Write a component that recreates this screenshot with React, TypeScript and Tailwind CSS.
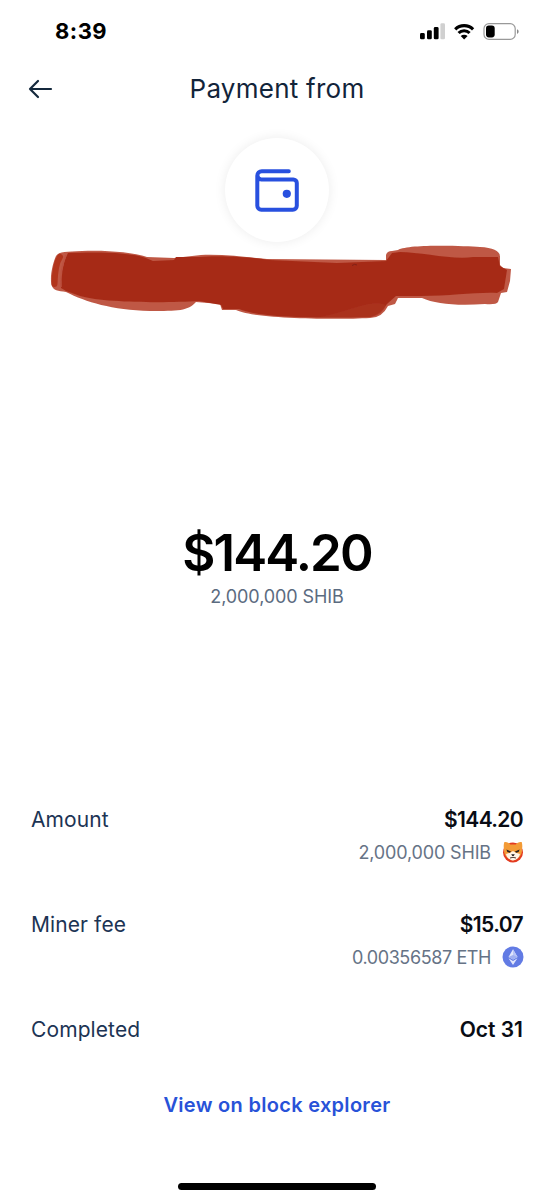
import type { ReactNode } from 'react';

function StatusIcons() {
  return (
    <svg width="100" height="20" viewBox="419 21 100 20" aria-hidden="true">
      <rect x="420" y="33" width="4.8" height="6.3" rx="1.4" />
      <rect x="427" y="30.2" width="4.8" height="9.1" rx="1.4" />
      <rect x="433.8" y="27" width="4.8" height="12.3" rx="1.4" />
      <rect x="440.4" y="23.3" width="4.6" height="16" rx="1.3" fill="#d0d0d0" />
      <path d="M455.2 29.4a12.6 12.6 0 0 1 17.9 0M458.6 33a7.7 7.7 0 0 1 11 0" fill="none" stroke="#000" strokeWidth="3.1" />
      <path d="M460.7 36.1a5 5 0 0 1 6.9 0l-3.45 3.5z" />
      <rect x="484" y="23.6" width="31.2" height="15.8" rx="5" fill="none" stroke="#999" strokeWidth="1.2" />
      <rect x="486" y="25.6" width="8.7" height="11.8" rx="2.8" />
      <path d="M517 29.2c2.2.8 2.2 3.8 0 4.6z" fill="#888" />
    </svg>
  );
}

function WalletIcon() {
  return (
    <svg width="46" height="46" viewBox="254 167 46 46" fill="none" stroke="#2850df" strokeWidth="4" aria-hidden="true">
      <path d="M288.8 171.2h-27a4.5 4.5 0 0 0-4.5 4.5v30a4 4 0 0 0 4 4h31.5a4 4 0 0 0 4-4v-22.8a3.5 3.5 0 0 0-3.5-3.5h-32a3.8 3.8 0 0 1-3.8-3.8" strokeLinecap="round" />
      <circle cx="286.8" cy="193.8" r="4.1" fill="#2850df" stroke="none" />
    </svg>
  );
}

function Scribble() {
  return (
    <svg className="relative -mt-0.5 ml-10 shrink-0 self-start" width="480" height="84" viewBox="40 240 480 84" aria-hidden="true">
      <defs>
        <filter id="brush" x="-5%" y="-10%" width="110%" height="120%">
          <feGaussianBlur stdDeviation="0.7" />
        </filter>
      </defs>
      <g filter="url(#brush)">
        <path fill="#bf5845" d="M52 286C49 279 53 262 56 256C59 251 67 252 82 251C105 250 132 252 147 257L174 258L201 255C222 254 245 257 267 259L386 260V255Q387 251 392 251L398 250C409 244 463 246 480 247Q499 248 500 256V265L503 268L511 269L510 281L507 292L501 293L498 302Q496 305 485 304C457 306 435 304 422 298H398L395 304L388 306Q382 318 370 318C334 320 255 319 236 310H222L220 304L196 302C188 311 178 311 150 311C112 310 86 302 66 292C58 291 53 290 52 286Z" />
        <path fill="#a62c18" d="M61 288C60 279 63 262 68 253C95 252 130 252 146 258L153 261L174 260L176 257H200C216 255 253 257 270 260L337 263L386 261L392 253L400 252C421 252 452 260 473 257H498L500 266L507 270L504 289L497 293C477 292 452 296 421 296H396L387 304Q380 315 370 317C329 318 263 319 239 309H223L221 305L199 301C166 303 105 303 80 296Q72 293 66 291Z" />
        <path d="M54.5 284Q55 264 60 257" fill="none" stroke="#b2351f" strokeWidth="6" strokeLinecap="round" />
        <path d="M61 287Q60 269 66 255" fill="none" stroke="#bd5140" strokeWidth="1.5" />
        <path d="M372 317Q383 314 386 305C370 299 352 311 320 317Z" fill="#ad321f" opacity=".7" />
      </g>
      <path d="M352 265.5q2.5-2 5-.5" fill="none" stroke="#7f2016" strokeWidth="1" />
    </svg>
  );
}

function ShibIcon() {
  return (
    <svg width="22" height="22" viewBox="0 0 22 22" aria-hidden="true">
      <circle cx="11" cy="11.5" r="10" fill="#e33b20" />
      <path d="M2.4 1C5 .5 7.2 2 8.2 3.4h5.6C15 1.8 17.2.5 19.7 1c.8 3 .8 5.3.2 7.4.6 4.6-2.6 9.6-8.9 11C4.9 18.2 1.5 13.3 2.1 8.4 1.5 5.8 1.5 3.3 2.4 1Z" fill="#f39b36" />
      <path d="M4 13 8.2 11.8 11 10l2.8 1.8 4.2 1.2C17.4 16.4 15 18.7 11 19.6 7 18.7 4.6 16.4 4 13Z" fill="#fff4e7" />
      <path d="m4.4 8.4 4.7 2.2-1.3 1.2-2.4-.7zM17.6 8.4 12.9 10.6l1.3 1.2 2.4-.7zM9.2 13.2h3.6l-1.1 1.9h-1.4z" fill="#282020" />
      <path d="M8 17q3-1.4 6 0" fill="none" stroke="#372520" strokeWidth=".9" />
    </svg>
  );
}

function EthIcon() {
  return (
    <svg width="22" height="22" viewBox="0 0 22 22" aria-hidden="true">
      <circle cx="11" cy="11" r="10.5" fill="#627be4" />
      <path d="M11 3.2 6.5 11 11 13.6 15.5 11z" fill="#dfe5fc" />
      <path d="M11 3.2V13.6L15.5 11z" fill="#b8c5f6" />
      <path d="m6.5 11 4.5-2 4.5 2-4.5 2.6z" fill="#9fb0f1" />
      <path d="M6.5 12.3 11 15l4.5-2.7L11 18.9z" fill="#e1e6fc" />
    </svg>
  );
}

function Detail({ label, value, children }: { label: ReactNode; value: ReactNode; children?: ReactNode }) {
  return (
    <div className="flex h-[105px] shrink-0 justify-between">
      <div className="h-8 whitespace-nowrap text-[21px] leading-8 tracking-[0.1px] text-[#1c3454]">{label}</div>
      <div className="flex flex-col items-end">
        <div className="h-8 whitespace-nowrap text-[21px] font-semibold leading-8 text-[#090c14]">{value}</div>
        {children}
      </div>
    </div>
  );
}

export default function App() {
  return (
    <main className="flex h-[1200px] w-[554px] flex-col overflow-hidden bg-white font-['Inter','Liberation_Sans',sans-serif] text-black">
      <div className="flex h-16 shrink-0 items-start justify-between pl-[55px] pr-[35px]">
        <div className="mt-[15px] text-[22px] font-bold leading-8"><span className="tracking-[0.5px]">8:39</span></div>
        <div className="mt-[21px]"><StatusIcons /></div>
      </div>
      <header className="grid h-[50px] shrink-0 grid-cols-[64px_1fr_64px] items-center">
        <button className="ml-7" aria-label="Back">
          <svg width="25" height="22" viewBox="0 0 25 22" fill="none" stroke="#14283c" strokeWidth="2.2" strokeLinecap="round" strokeLinejoin="round">
            <path d="M23 11H2M10 3 2 11l8 8" />
          </svg>
        </button>
        <h1 className="whitespace-nowrap text-center text-[26px] leading-9 text-[#12243a]"><span className="tracking-[0.25px]">Payment from</span></h1>
      </header>
      <section className="flex h-[388px] shrink-0 flex-col items-center pt-6">
        <div className="flex h-[104px] w-[104px] shrink-0 items-center justify-center rounded-full bg-white shadow-[0_0_12px_rgba(0,0,0,0.08)]">
          <WalletIcon />
        </div>
        <Scribble />
      </section>
      <section className="flex h-[302px] shrink-0 flex-col items-center pt-[19px]">
        <div className="h-16 whitespace-nowrap text-[51px] font-semibold leading-[64px]"><span className="tracking-[-1.9px]">$144.20</span></div>
        <div className="mt-[-2px] h-7 whitespace-nowrap text-[18px] leading-7 text-[#5b6b80]"><span className="tracking-[-0.1px]">2,000,000 SHIB</span></div>
      </section>
      <section className="flex h-[285px] shrink-0 flex-col pl-[31px] pr-[31px]">
        <Detail label={<span>Amount</span>} value={<span className="tracking-[-0.65px]">$144.20</span>}>
          <div className="-mr-px flex h-8 items-center gap-[11px] text-[18px] text-[#667386]"><span className="tracking-[-0.15px]">2,000,000 SHIB</span><ShibIcon /></div>
        </Detail>
        <Detail label={<span>Miner fee</span>} value={<span className="tracking-[-0.6px]">$15.07</span>}>
          <div className="-mr-px flex h-8 items-center gap-[11px] text-[18px] text-[#667386]"><span className="tracking-[-0.4px]">0.00356587 ETH</span><EthIcon /></div>
        </Detail>
        <Detail label={<span>Completed</span>} value={<span>Oct 31</span>} />
      </section>
      <footer className="flex flex-col items-center">
        <a className="h-8 whitespace-nowrap text-[20px] font-semibold leading-8 text-[#2852d8]"><span className="tracking-[0.3px]">View on block explorer</span></a>
        <div className="mt-[62px] h-[6.5px] w-[198px] rounded-full bg-black" />
      </footer>
    </main>
  );
}
